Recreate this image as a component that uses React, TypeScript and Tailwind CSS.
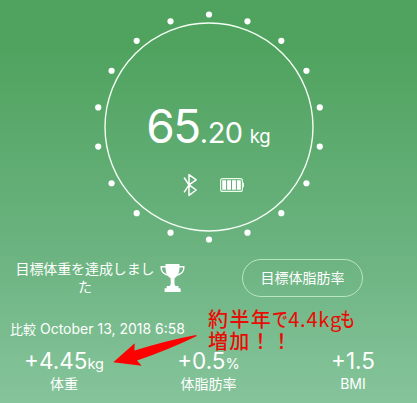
const dots = Array.from({ length: 18 }, (_, i) => {
  const angle = (i * 20 * Math.PI) / 180;
  return { x: 120 + 112.5 * Math.sin(angle), y: 120 - 112.5 * Math.cos(angle) };
});

const stats = [
  { value: "+4.45", unit: "kg", label: "体重", width: "w-[128px]" },
  { value: "+0.5", unit: "%", label: "体脂肪率", width: "w-[161px]" },
  { value: "+1.5", unit: "", label: "BMI", width: "w-[128px]" },
];

function Dial() {
  return (
    <svg className="absolute left-[88.5px] top-[7px]" width="240" height="240" viewBox="0 0 240 240" fill="none">
      <circle cx="120" cy="120" r="104" stroke="#f4fff4" strokeWidth="1.4" />
      {dots.map((dot, i) => (
        <circle key={i} cx={dot.x} cy={dot.y} r="3.1" fill="white" />
      ))}
    </svg>
  );
}

function BluetoothIcon() {
  return (
    <svg width="16" height="24" viewBox="0 0 16 24" fill="none" stroke="white" strokeWidth="1.5" strokeLinejoin="round" strokeLinecap="round">
      <path d="M2.4 5 7 11.9 14.2 17 7 22.4V1.6L14.2 6.8 7 11.9 2.4 18.8" />
    </svg>
  );
}

function BatteryIcon() {
  return (
    <svg width="24" height="14" viewBox="0 0 24 14" fill="none">
      <rect x="0.6" y="0.6" width="21.8" height="12.8" rx="2" stroke="#eaffea" strokeWidth="1.1" />
      <path d="M23 4.5q1 0 1 1v3q0 1-1 1z" fill="#eaffea" />
      <path d="M2.2 2.2h3.9v9.6H2.2zM7.1 2.2H11v9.6H7.1zM12 2.2h3.9v9.6H12zM16.9 2.2h3.9v9.6h-3.9z" fill="white" />
    </svg>
  );
}

function TrophyIcon() {
  return (
    <svg width="25" height="28" viewBox="0 0 25 28" fill="none">
      <path d="M6 2.8H1.2C.8 7 3.5 10.5 8.8 11.2M19 2.8h4.8c.4 4.2-2.3 7.7-7.6 8.4" stroke="white" strokeWidth="1.5" />
      <path d="M5.5 0h14v3.5c0 5.2-2 9-5 10.7v5.2c0 1.7.7 2.6 2.6 2.6h1.4v2.2h2.1V28H4.6v-3.8h2.1V22h1.4c1.9 0 2.6-.9 2.6-2.6v-5.2c-3.2-1.7-5.2-5.5-5.2-10.7z" fill="white" />
    </svg>
  );
}

function Annotation() {
  return (
    <>
      <svg className="absolute left-[112px] top-[334px]" width="86" height="34" viewBox="0 0 86 34">
        <path d="M1.3 28.3 22.7 9.3 22.4 16.6Q54 6.5 84 .9L84.8 2Q56 16 25 26.5L29.7 31.7z" fill="#ff0000" />
      </svg>
      <div className="absolute left-[208px] top-[308px] whitespace-nowrap font-['Noto_Sans_CJK_JP',sans-serif] text-[20px] font-medium leading-[21.5px] text-[#e80c04]">
        <div className="flex">
          <span className="tracking-[1.4px]">約半年</span>
          <span className="w-[16px] origin-left scale-x-[0.8]">で</span>
          <span className="w-[52px] font-normal tracking-[0.8px]">4.4kg</span>
          <span className="origin-left scale-x-[0.75]">も</span>
        </div>
        <div className="tracking-[1.2px]">増加！！</div>
      </div>
    </>
  );
}

export default function App() {
  return (
    <main className="relative h-[403px] w-[417px] overflow-hidden bg-linear-to-b from-[#50a35f] from-12% via-[#6bb380] via-62% to-[#86c49b] font-[Inter,'Noto_Sans_CJK_JP',sans-serif] text-white">
      <section className="relative h-[259px] pt-[96px]">
        <Dial />
        <div className="flex h-[60px] items-baseline justify-center leading-[60px]">
          <span className="text-[46px] tracking-[-1.5px]">65</span>
          <span className="text-[29px] tracking-[-0.5px]">.20</span>
          <span className="ml-[7px] text-[18.5px]">kg</span>
        </div>
        <div className="mt-[17px] flex items-center gap-[22px] pl-[182px]">
          <BluetoothIcon />
          <BatteryIcon />
        </div>
      </section>

      <section className="flex h-[59px] items-start">
        <p className="ml-[14px] w-[142px] pt-px text-center text-[14px] leading-[17.5px] tracking-[-0.1px]">
          目標体重を達成しまし
          <br />た
        </p>
        <div className="ml-[4px] pt-[5px]">
          <TrophyIcon />
        </div>
        <button className="ml-[57px] h-[38px] w-[121px] rounded-full border border-[#b9e6c2] pb-px text-[14px]">目標体脂肪率</button>
      </section>

      <p className="pl-[10px] text-[14px] font-normal leading-[22px]">
        <span className="text-[13px]">比較</span> October 13, 2018 6:58
      </p>

      <section className="flex pt-[7px]">
        {stats.map((stat) => (
          <div key={stat.label} className={`${stat.width} text-center`}>
            <div className="h-[28px] text-[22.5px] leading-[28px]">
              {stat.value}
              <span className="text-[14.5px] leading-none">{stat.unit}</span>
            </div>
            <div className="text-[14px] leading-[18px]">{stat.label}</div>
          </div>
        ))}
      </section>
      <Annotation />
    </main>
  );
}
